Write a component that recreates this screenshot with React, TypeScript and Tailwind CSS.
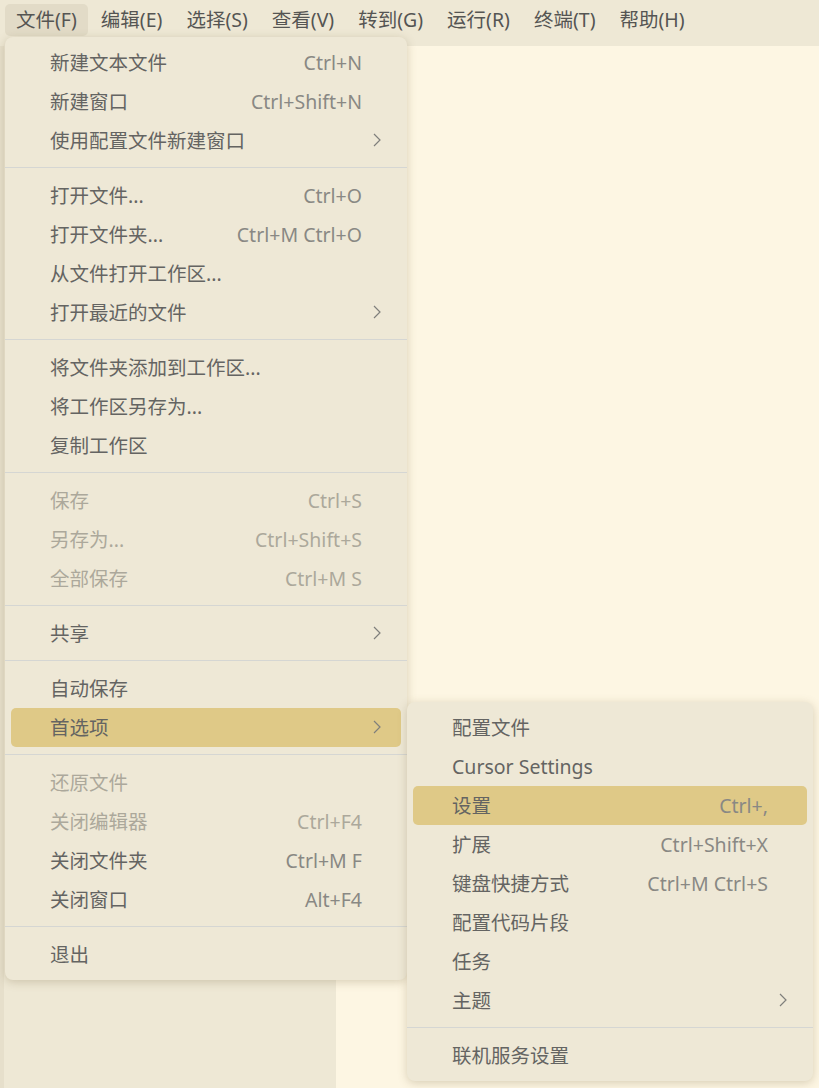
import React from "react";

type Entry =
  | { kind: "item"; label: string; keys?: string; sub?: boolean; disabled?: boolean; active?: boolean }
  | { kind: "sep" };

const fileMenu: Entry[] = [
  { kind: "item", label: "新建文本文件", keys: "Ctrl+N" },
  { kind: "item", label: "新建窗口", keys: "Ctrl+Shift+N" },
  { kind: "item", label: "使用配置文件新建窗口", sub: true },
  { kind: "sep" },
  { kind: "item", label: "打开文件...", keys: "Ctrl+O" },
  { kind: "item", label: "打开文件夹...", keys: "Ctrl+M Ctrl+O" },
  { kind: "item", label: "从文件打开工作区..." },
  { kind: "item", label: "打开最近的文件", sub: true },
  { kind: "sep" },
  { kind: "item", label: "将文件夹添加到工作区..." },
  { kind: "item", label: "将工作区另存为..." },
  { kind: "item", label: "复制工作区" },
  { kind: "sep" },
  { kind: "item", label: "保存", keys: "Ctrl+S", disabled: true },
  { kind: "item", label: "另存为...", keys: "Ctrl+Shift+S", disabled: true },
  { kind: "item", label: "全部保存", keys: "Ctrl+M S", disabled: true },
  { kind: "sep" },
  { kind: "item", label: "共享", sub: true },
  { kind: "sep" },
  { kind: "item", label: "自动保存" },
  { kind: "item", label: "首选项", sub: true, active: true },
  { kind: "sep" },
  { kind: "item", label: "还原文件", disabled: true },
  { kind: "item", label: "关闭编辑器", keys: "Ctrl+F4", disabled: true },
  { kind: "item", label: "关闭文件夹", keys: "Ctrl+M F" },
  { kind: "item", label: "关闭窗口", keys: "Alt+F4" },
  { kind: "sep" },
  { kind: "item", label: "退出" },
];

const prefMenu: Entry[] = [
  { kind: "item", label: "配置文件" },
  { kind: "item", label: "Cursor Settings" },
  { kind: "item", label: "设置", keys: "Ctrl+,", active: true },
  { kind: "item", label: "扩展", keys: "Ctrl+Shift+X" },
  { kind: "item", label: "键盘快捷方式", keys: "Ctrl+M Ctrl+S" },
  { kind: "item", label: "配置代码片段" },
  { kind: "item", label: "任务" },
  { kind: "item", label: "主题", sub: true },
  { kind: "sep" },
  { kind: "item", label: "联机服务设置" },
];

const topItems = ["文件(F)", "编辑(E)", "选择(S)", "查看(V)", "转到(G)", "运行(R)", "终端(T)", "帮助(H)"];

function Chevron() {
  return (
    <svg width="10" height="16" viewBox="0 0 10 16" className="text-[#7f7f7c]">
      <path d="M2 2 L8 8 L2 14" fill="none" stroke="currentColor" strokeWidth="1.2" />
    </svg>
  );
}

function Menu({ entries }: { entries: Entry[] }) {
  return (
    <div className="rounded-[8px] bg-[#eee8d6] py-[6px] shadow-[0_2px_10px_rgba(120,100,60,0.28)]">
      {entries.map((e, i) =>
        e.kind === "sep" ? (
          <div key={i} className="h-[16px] py-[7px]">
            <div className="h-px bg-[#d5d6d3]" />
          </div>
        ) : (
          <div
            key={i}
            className={`relative mx-[6px] flex h-[39px] items-center rounded-[5px] pl-[39px] pr-[39px] ${
              e.active ? "bg-[#dfc987]" : ""
            }`}
          >
            <span className={`flex-1 ${e.disabled ? "text-[#aca89b]" : "text-[#646462]"}`}>{e.label}</span>
            {e.keys && (
              <span className={e.disabled ? "text-[#aca89b]" : "text-[#898884]"}>{e.keys}</span>
            )}
            {e.sub && (
              <span className="absolute right-[19px] top-[11px] flex">
                <Chevron />
              </span>
            )}
          </div>
        )
      )}
    </div>
  );
}

export default function App() {
  return (
    <div
      className="relative h-[1088px] w-[819px] overflow-hidden bg-[#fdf6e3] text-[19.5px] leading-none"
      style={{ fontFamily: '"Noto Sans", "Noto Sans CJK SC", sans-serif' }}
    >
      {/* menu bar */}
      <div className="flex h-[46px] items-start bg-[#eee8d5] pl-[5px] pt-[4px]">
        {topItems.map((t, i) => (
          <div
            key={t}
            className={`flex h-[32px] items-center rounded-[5px] px-[11px] text-[#555553] ${
              i === 0 ? "bg-[#e2dbc7]" : ""
            } ${i > 0 ? "ml-[2px]" : ""}`}
          >
            {t}
          </div>
        ))}
      </div>

      {/* workbench */}
      <div className="flex h-[1042px]">
        <div className="flex w-[336px] bg-[#eee8d5]">
          <div className="w-[4px] bg-[#e6dfcb]" />
        </div>
        <div className="flex-1 bg-[#fdf6e3]" />
      </div>

      {/* file menu */}
      <div className="absolute left-[5px] top-[37px] w-[402px]">
        <Menu entries={fileMenu} />
      </div>

      {/* preferences submenu */}
      <div className="absolute left-[407px] top-[702px] w-[406px]">
        <Menu entries={prefMenu} />
      </div>
    </div>
  );
}
